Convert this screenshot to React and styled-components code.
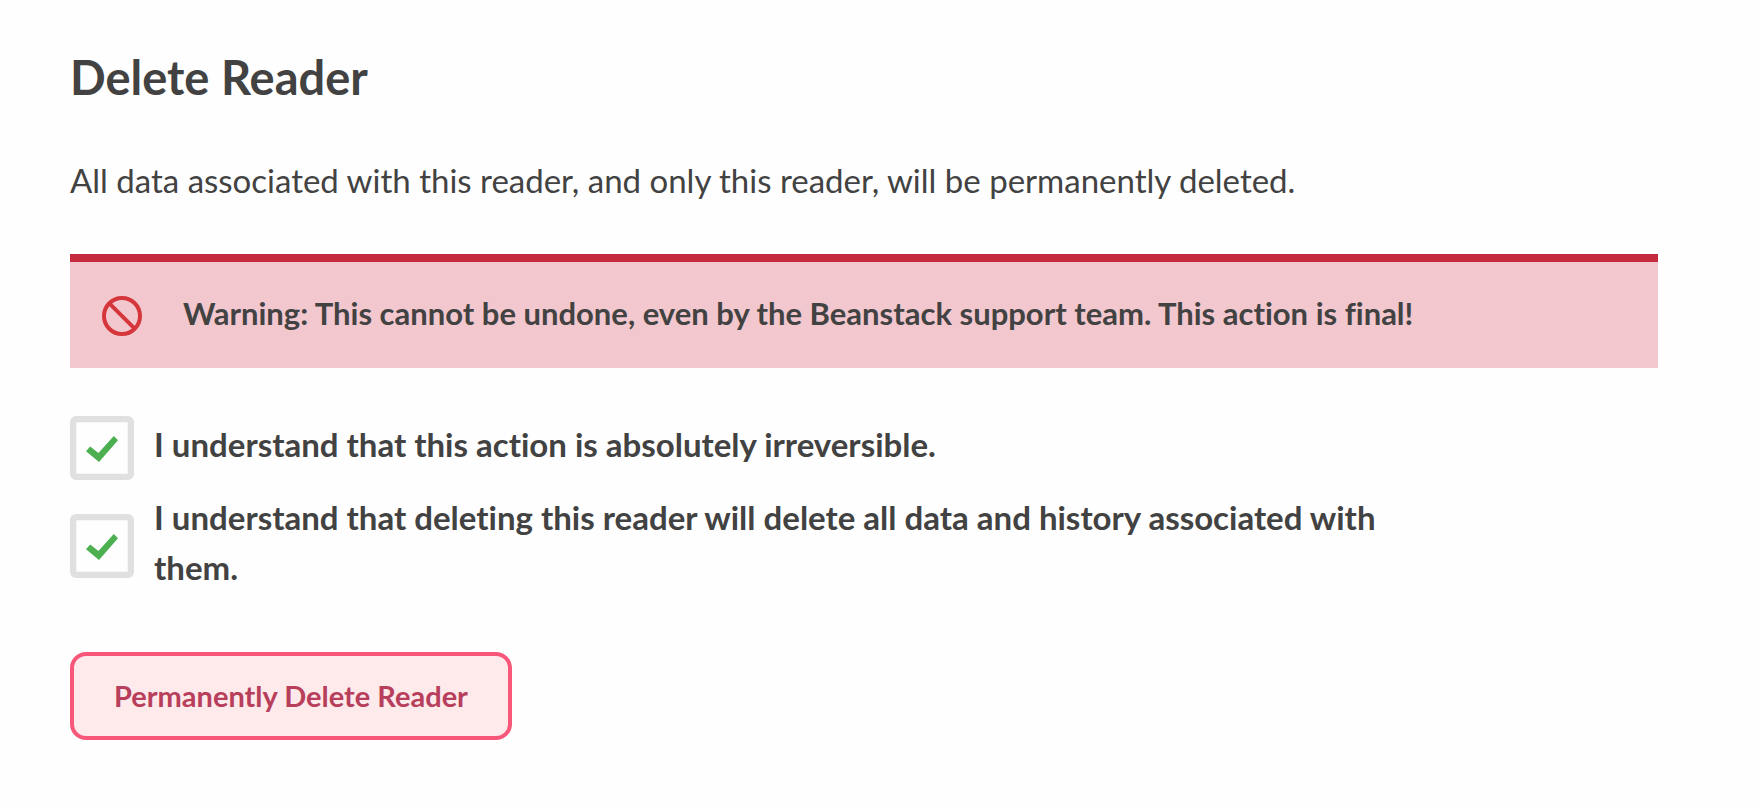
import React, {useState} from 'react'
import styled, {createGlobalStyle} from 'styled-components'

const GlobalStyle = createGlobalStyle`
  * {
    box-sizing: border-box;
  }

  body {
    margin: 0;
    background-color: #fefefe;
    color: #424242;
    font-family: Lato, "Open Sans", sans-serif;
    font-variant-ligatures: none;
  }
`

const Page = styled.main`
  padding: 48px 102px 68px 70px;
`

const Title = styled.h1`
  margin: 0;
  font-size: 47px;
  font-weight: 700;
  line-height: 58px;
`

const Description = styled.p`
  margin: 50px 0;
  font-size: 33px;
  line-height: 48px;
`

const Warning = styled.div`
  display: flex;
  align-items: center;
  gap: 41px;
  padding: 29px 32px 27px;
  border-top: 8px solid #c42b3f;
  background-color: #f2c7ce;
`

const WarningText = styled.p`
  margin: 0;
  padding-bottom: 6px;
  font-size: 31px;
  font-weight: 700;
  line-height: 44px;
`

const BanIcon = styled.svg`
  flex: none;
  width: 40px;
  height: 40px;
`

const Confirmations = styled.div`
  display: flex;
  flex-direction: column;
  gap: 12px;
  margin: 48px 0 52px;
`

const Option = styled.label`
  display: flex;
  align-items: center;
  gap: 20px;
  max-width: 1340px;
  font-size: 33px;
  font-weight: 700;
  line-height: 50px;
  cursor: pointer;
`

const OptionText = styled.span`
  padding-bottom: 8px;
`

const CheckBox = styled.span`
  display: grid;
  flex: none;
  width: 64px;
  height: 64px;

  > * {
    grid-area: 1 / 1;
  }
`

const Input = styled.input`
  appearance: none;
  width: 64px;
  height: 64px;
  margin: 0;
  border: 6px solid #e0e0e0;
  border-radius: 6px;
  background-color: #fefefe;
  box-shadow: inset 0 0 2px #e0e0e0;
  cursor: pointer;
`

const CheckMark = styled.svg`
  z-index: 1;
  width: 64px;
  height: 64px;
  pointer-events: none;
`

const DeleteButton = styled.button`
  padding: 20px 40px;
  border: 4px solid #f9577a;
  border-radius: 16px;
  background-color: #fee9eb;
  color: #b83f5b;
  font-family: inherit;
  font-size: 29px;
  font-weight: 700;
  line-height: 40px;
  cursor: pointer;
`

const Confirmation = ({children}) => {
    const [checked, setChecked] = useState(true)

    return (
        <Option>
            <CheckBox>
                <Input type="checkbox" checked={checked} onChange={(e) => setChecked(e.target.checked)}/>
                {checked && (
                    <CheckMark viewBox="0 0 64 64" aria-hidden="true">
                        <path d="M16 35.2 20.2 30.6 28.4 37 43.8 20 48 24.2 29 46z" fill="#4caf50"/>
                    </CheckMark>
                )}
            </CheckBox>
            <OptionText>{children}</OptionText>
        </Option>
    )
}

const App = () => {
    return (
        <>
            <GlobalStyle/>
            <Page>
                <Title>Delete Reader</Title>
                <Description>
                    All data associated with this reader, and only this reader, will be permanently deleted.
                </Description>

                <Warning role="alert">
                    <BanIcon viewBox="0 0 40 40" fill="none" stroke="#d5363b" strokeWidth="4" aria-hidden="true">
                        <circle cx="20" cy="20" r="18"/>
                        <path d="M7.3 7.3l25.4 25.4"/>
                    </BanIcon>
                    <WarningText>
                        Warning: This cannot be undone, even by the Beanstack support team. This action is final!
                    </WarningText>
                </Warning>

                <Confirmations>
                    <Confirmation>I understand that this action is absolutely irreversible.</Confirmation>
                    <Confirmation>
                        I understand that deleting this reader will delete all data and history associated with them.
                    </Confirmation>
                </Confirmations>

                <DeleteButton type="button">Permanently Delete Reader</DeleteButton>
            </Page>
        </>
    )
}

export default App
